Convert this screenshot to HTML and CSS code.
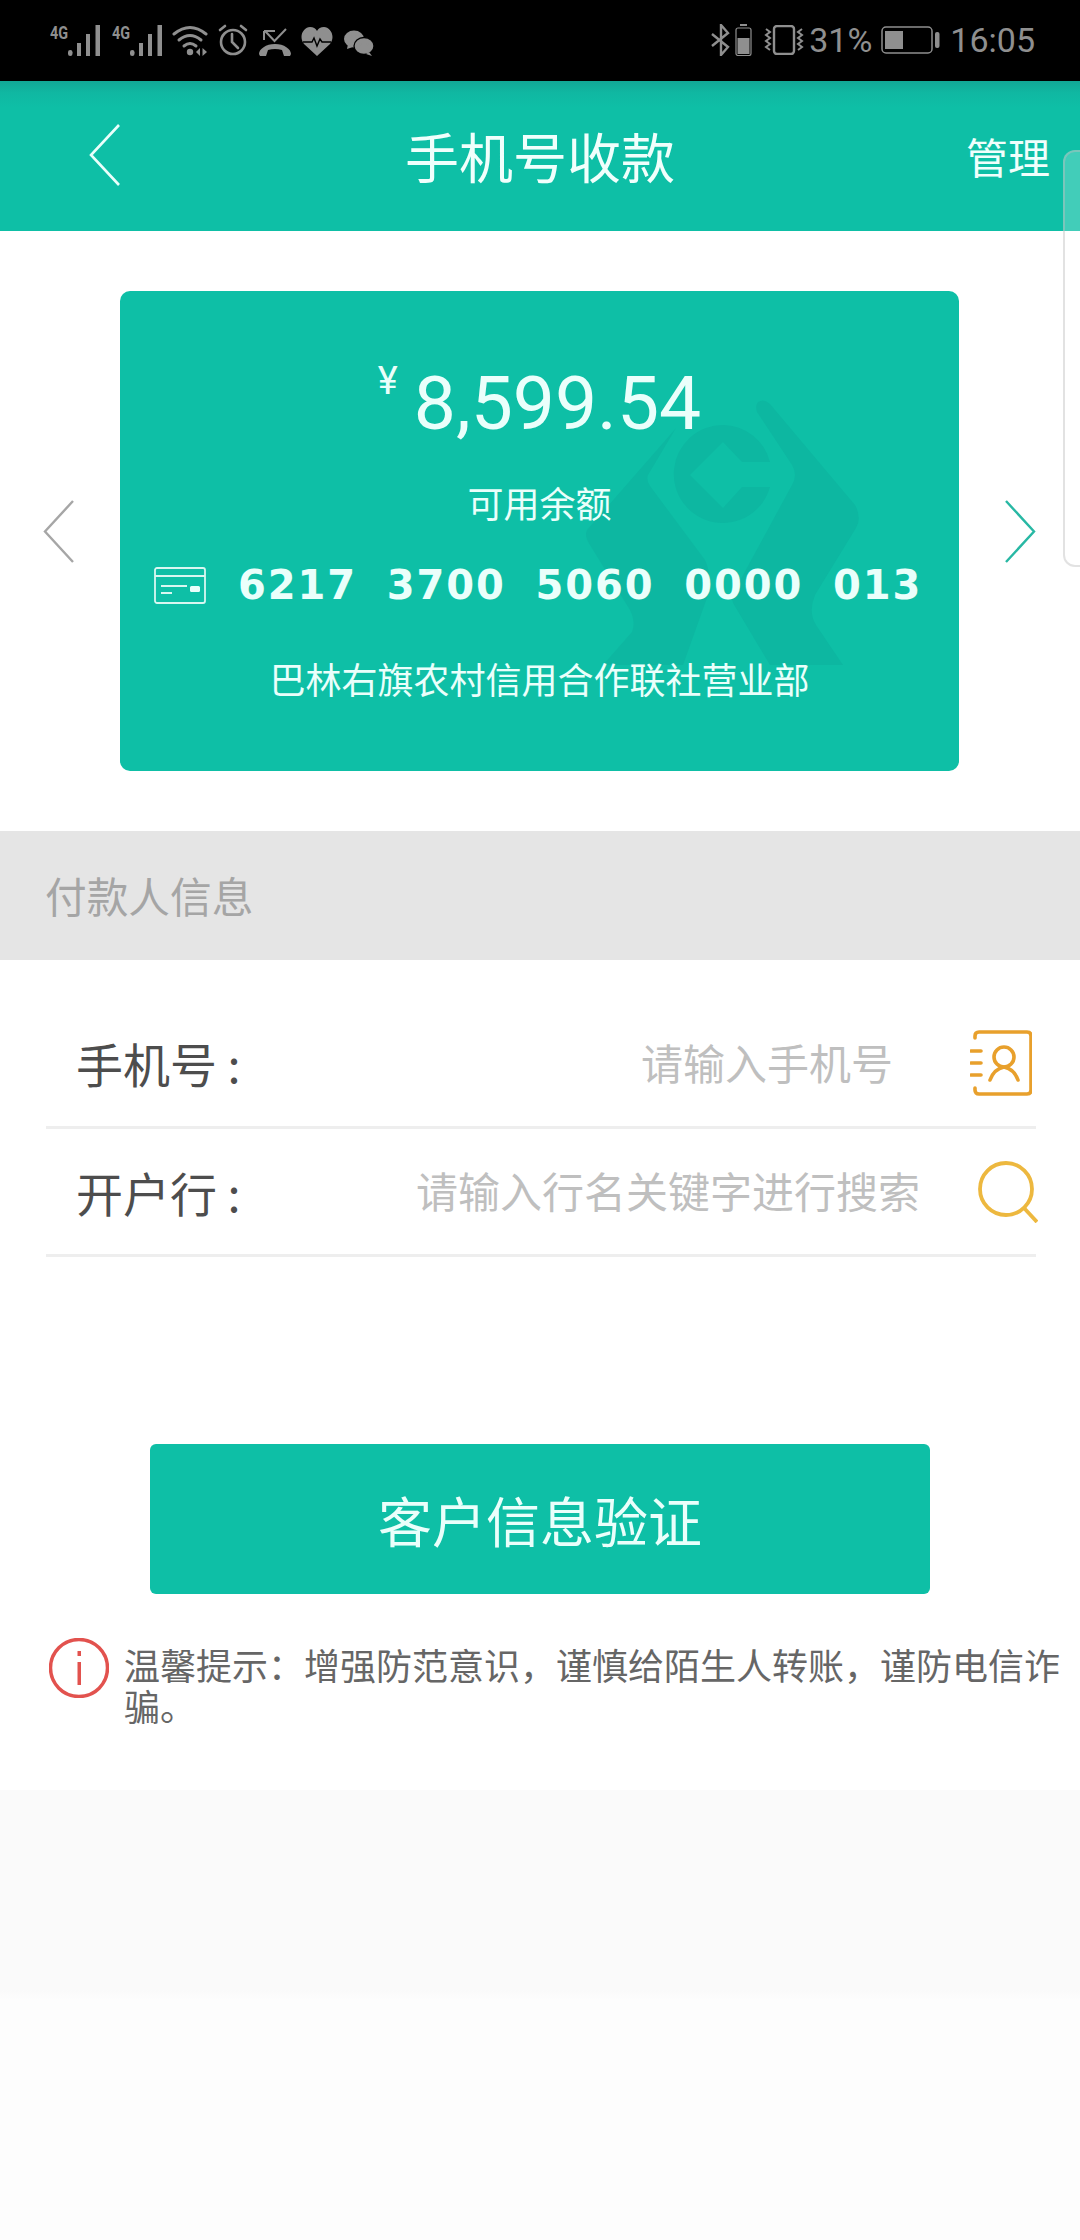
FILE: index.html
```html
<!DOCTYPE html>
<html lang="zh-CN">
<head>
<meta charset="utf-8">
<title>手机号收款</title>
<link rel="stylesheet" href="styles.css">
</head>
<body>
<div class="page">
  <div class="status">
    <div class="status-left">
      <span class="net">4G</span>
      <svg class="sig" viewBox="0 0 33 32"><rect x="0" y="26" width="4.500" height="6" rx="2.200"/><rect x="9" y="19" width="4" height="13"/><rect x="18" y="10" width="4" height="22"/><rect x="27.500" y="1" width="4.500" height="31"/></svg>
      <span class="net net2">4G</span>
      <svg class="sig" viewBox="0 0 33 32"><rect x="0" y="26" width="4.500" height="6" rx="2.200"/><rect x="9" y="19" width="4" height="13"/><rect x="18" y="10" width="4" height="22"/><rect x="27.500" y="1" width="4.500" height="31"/></svg>
      <svg class="ic-wifi" viewBox="0 0 36 32"><g fill="none" stroke="#8f8f8f" stroke-width="3" stroke-linecap="round"><path d="M2 10Q18-3 34 10"/><path d="M7 16Q18 7 29 16"/><path d="M12 22Q18 17 24 22"/></g><circle cx="18" cy="28" r="3.200" fill="#8f8f8f"/><path d="M28 24v8l-4-4zM30.500 24v8l4.500-4z" fill="#8f8f8f"/></svg>
      <svg class="ic-alarm" viewBox="0 0 30 32"><g fill="none" stroke="#8f8f8f" stroke-width="2.600" stroke-linecap="round"><circle cx="15" cy="18" r="12"/><path d="M14 10v8l6 6M2 6l5-4M28 6l-5-4"/></g></svg>
      <svg class="ic-call" viewBox="0 0 32 28"><path d="M5 3h11M5 3v9M6 3l9.500 10L27 1" fill="none" stroke="#8f8f8f" stroke-width="2"/><path d="M0 26c0-5 7-10 16-10s16 5 16 10l-1 2h-6l-2-6q-7-2-14 0l-2 6H1z" fill="#8f8f8f"/></svg>
      <svg class="ic-heart" viewBox="0 0 32 29"><path d="M16 29 3 17C-3 9 3 0 9 0q5 0 7 4 2-4 7-4c6 0 12 9 6 17z" fill="#8f8f8f"/><path d="M2 15h9l2-4 3 8 3-7 2 3h9" fill="none" stroke="#000" stroke-width="1.400"/></svg>
      <svg class="ic-wechat" viewBox="0 0 30 26"><ellipse cx="10" cy="9" rx="10" ry="8.500" fill="#8f8f8f"/><path d="M4 14l-1 5 6-2z" fill="#8f8f8f"/><circle cx="6.500" cy="6.500" r="1.400"/><circle cx="13" cy="6.500" r="1.400"/><ellipse cx="20" cy="16" rx="10" ry="8.500" fill="#8f8f8f" stroke="#000" stroke-width="1.300"/><path d="M25 22l3 4-6-2z" fill="#8f8f8f"/><circle cx="16.500" cy="14.500" r="1.400"/><circle cx="23.500" cy="14.500" r="1.400"/></svg>
    </div>
    <div class="status-right">
      <svg class="ic-bt" viewBox="0 0 21 32"><path d="M1 10l16 13-7 8V1l7 8L1 22" fill="none" stroke="#8f8f8f" stroke-width="2.400"/></svg>
      <svg class="ic-minibat" viewBox="0 0 17 32"><rect x="5" y="0" width="7" height="2" fill="#8f8f8f"/><rect x="1" y="4" width="15" height="27.500" rx="2" fill="none" stroke="#8f8f8f" stroke-width="1.200"/><rect x="2.500" y="14" width="12" height="16" fill="#8f8f8f"/></svg>
      <svg class="ic-vib" viewBox="0 0 40 30"><rect x="10" y="1" width="20" height="28" rx="3" fill="none" stroke="#8f8f8f" stroke-width="2.400"/><path d="M2 4l4 3-4 3 4 3-4 3 4 3-4 3 4 3M38 4l-4 3 4 3-4 3 4 3-4 3 4 3-4 3" fill="none" stroke="#8f8f8f" stroke-width="2"/></svg>
      <span class="pct">31%</span>
      <svg class="ic-bat" viewBox="0 0 59 28"><rect x="1" y="1" width="50" height="26" rx="4" fill="none" stroke="#8f8f8f" stroke-width="1.500"/><rect x="4" y="5" width="18" height="18" fill="#8f8f8f"/><rect x="54" y="6" width="4.500" height="16" rx="2" fill="#8f8f8f"/></svg>
      <span class="time">16:05</span>
    </div>
  </div>

  <header class="header">
    <svg class="chev-back" viewBox="0 0 31 62"><path d="M30 1 2 31l28 30" fill="none" stroke="#eafffb" stroke-width="2.600"/></svg>
    <h1 class="title">手机号收款</h1>
    <a class="manage">管理</a>
  </header>

  <section class="carousel">
    <svg class="chev" viewBox="0 0 31 63"><path d="M30 1 2 31.500 30 62" fill="none" stroke="#a6a6a6" stroke-width="2.400"/></svg>
    <div class="card">
      <svg class="watermark" viewBox="0 0 300 300">
        <path d="M17 140 100 45 106 38 78 85Q76 90 80 96L135 170Q142 185 138 205L113 275H33L62 242Q66 232 60 220L20 155Q14 146 17 140Z"/>
        <path d="M188 12Q194 8 200 14L285 115Q292 128 286 138L245 205Q238 222 246 235L273 275H200L163 213Q160 205 166 198L222 95Q228 85 222 75L187 22Q185 16 188 12Z"/>
        <path fill-rule="evenodd" d="M153 35A49 49 0 0 1 200 72H172L153 52 120 85 153 118 172 97H200A49 49 0 1 1 153 35Z"/>
      </svg>
      <div class="amount"><span class="yen">¥</span><span class="num">8,599.54</span></div>
      <div class="avail">可用余额</div>
      <div class="cardno">
        <svg class="ic-card" viewBox="0 0 52 37"><g fill="none" stroke="#d8f7f1" stroke-width="1.800"><rect x="1" y="1" width="50" height="35" rx="2"/><path d="M1 9h50M7 19h26M7 26h11"/></g><rect x="36" y="19" width="10" height="6" rx="1.500" fill="#eafffb"/></svg>
        <span class="digits">6217 3700 5060 0000 013</span>
      </div>
      <div class="branch">巴林右旗农村信用合作联社营业部</div>
    </div>
    <svg class="chev" viewBox="0 0 31 63"><path d="M1 1l28 30.500L1 62" fill="none" stroke="#28b8a4" stroke-width="2.400"/></svg>
  </section>

  <div class="band">付款人信息</div>

  <form class="form">
    <div class="row">
      <span class="label">手机号 :</span>
      <span class="hint">请输入手机号</span>
      <svg class="ic-contact" viewBox="0 0 62 66"><g fill="none" stroke="#e8a02c" stroke-width="3.600" stroke-linecap="round"><path d="M5 8V6q0-4 4-4h48q4 0 4 4v54q0 4-4 4H9q-4 0-4-4v-2"/><path d="M1 21h10M1 33h10M1 45h10"/><circle cx="34" cy="27" r="10"/><path d="M20 50q4-11 14-13 10 2 14 13"/></g></svg>
    </div>
    <div class="row">
      <span class="label">开户行 :</span>
      <span class="hint hint-long">请输入行名关键字进行搜索</span>
      <svg class="ic-search" viewBox="0 0 60 62"><g fill="none" stroke="#edb83f" stroke-width="3.800"><circle cx="28" cy="28" r="26"/><path d="M46 47l13 14"/></g></svg>
    </div>
  </form>

  <div class="action"><button class="verify" type="button">客户信息验证</button></div>

  <div class="tip">
    <svg class="ic-info" viewBox="0 0 60 60"><circle cx="30" cy="30" r="28.500" fill="none" stroke="#e2524e" stroke-width="3.500"/><rect x="28.500" y="13" width="3.500" height="5" fill="#e2524e"/><rect x="28.500" y="24" width="3.500" height="23" fill="#e2524e"/></svg>
    <p class="tip-text">温馨提示：增强防范意识，谨慎给陌生人转账，谨防电信诈骗。</p>
  </div>

  <div class="foot"></div>
  <div class="side-panel"></div>
</div>
</body>
</html>
```
FILE: styles.css
```css
* { box-sizing: border-box; margin: 0; padding: 0; }
html, body { background: #fff; }
body { font-family: "Noto Sans CJK SC", "Noto Sans", sans-serif; }
.page { position: relative; width: 1080px; height: 2240px; overflow: hidden; display: flex; flex-direction: column; }

.status { height: 81px; flex: none; background: #000; display: flex; justify-content: space-between; align-items: flex-start; padding: 24px 45px 0 50px; color: #8f8f8f; fill: #8f8f8f; }
.status-left, .status-right { display: flex; align-items: center; height: 32px; }
.net { font-family: "Roboto", sans-serif; font-size: 18px; font-weight: 700; line-height: 18px; align-self: flex-start; transform: scaleX(.8); transform-origin: left top; width: 18px; white-space: nowrap; }
.net2 { margin-left: 11px; }
.sig { width: 33px; height: 32px; }
.ic-wifi { width: 36px; height: 32px; margin-left: 9px; }
.ic-alarm { width: 30px; height: 32px; margin-left: 10px; }
.ic-call { width: 32px; height: 28px; margin-left: 11px; margin-top: 4px; }
.ic-heart { width: 32px; height: 29px; margin-left: 10px; margin-top: 3px; }
.ic-wechat { width: 30px; height: 26px; margin-left: 11px; margin-top: 5px; }
.ic-bt { width: 21px; height: 32px; }
.ic-minibat { width: 17px; height: 32px; margin-left: 3px; }
.ic-vib { width: 40px; height: 30px; margin-left: 12px; }
.pct, .time { font-family: "Roboto", sans-serif; font-size: 34px; line-height: 32px; }
.pct { margin-left: 5px; }
.ic-bat { width: 59px; height: 28px; margin-left: 9px; }
.time { margin-left: 10px; }

.header { height: 150px; flex: none; position: relative; background: linear-gradient(#12a896 0, #10b8a2 12px, #0ebfa6 26px); display: grid; grid-template-columns: 1fr auto 1fr; align-items: center; color: #f0fffc; }
.chev-back { width: 31px; height: 62px; margin-left: 89px; margin-top: -2px; }
.title { font-size: 54px; font-weight: 400; line-height: 60px; }
.manage { justify-self: end; font-size: 42px; line-height: 48px; padding-right: 30px; }

.carousel { height: 600px; flex: none; padding: 60px 44px 0 43px; display: flex; justify-content: space-between; align-items: flex-start; }
.chev { width: 31px; height: 63px; margin-top: 209px; }
.card { position: relative; width: 839px; height: 480px; border-radius: 10px; background: #0ebfa6; color: #eafffb; display: flex; flex-direction: column; align-items: center; overflow: hidden; }
.watermark { position: absolute; left: 450px; top: 99px; width: 300px; height: 300px; fill: #0db7a1; }
.amount, .avail, .cardno, .branch { position: relative; }
.amount { display: flex; align-items: flex-start; gap: 16px; height: 100px; margin-top: 68px; }
.yen { font-family: "Roboto", sans-serif; font-size: 38px; line-height: 44px; }
.num { font-family: "Roboto", sans-serif; font-size: 75px; line-height: 88px; font-weight: 400; }
.avail { font-size: 36px; line-height: 46px; margin-top: 20px; }
.cardno { align-self: stretch; display: flex; align-items: center; padding-left: 34px; height: 40px; margin-top: 40px; }
.ic-card { width: 52px; height: 37px; flex: none; }
.digits { font-family: "DejaVu Sans", sans-serif; font-weight: 700; font-size: 40px; letter-spacing: 1.900px; word-spacing: 14px; margin-left: 32px; white-space: nowrap; }
.branch { font-size: 36px; line-height: 48px; margin-top: 49px; }

.band { height: 129px; flex: none; background: #e5e5e5; color: #a5a5a5; font-size: 41.700px; line-height: 129px; padding-left: 45px; }

.form { flex: none; padding: 40px 44px 0 46px; height: 299px; display: flex; flex-direction: column; }
.row { height: 128px; flex: none; border-bottom: 3px solid #eee; display: flex; align-items: center; position: relative; }
.row:first-child { height: 129px; }
.label { font-size: 47px; color: #4d4d4d; margin-left: 30px; flex: 1; line-height: 56px; }
.hint { font-size: 42px; color: #bfbfbf; line-height: 56px; margin-bottom: 3px; }
.hint-long { margin-right: 58px; }
.ic-contact { width: 62px; height: 66px; margin-left: 77px; margin-right: 4px; }
.ic-search { width: 60px; height: 62px; margin-right: -2px; }

.action { flex: none; padding: 185px 150px 0; }
.verify { display: block; width: 780px; height: 150px; border: 0; border-radius: 6px; background: #0ebfa6; color: #eafffb; font: inherit; font-size: 54px; }

.tip { flex: none; display: flex; align-items: flex-start; padding: 44px 10px 0 49px; height: 196px; }
.ic-info { width: 60px; height: 60px; flex: none; }
.tip-text { margin-left: 15px; font-size: 36px; line-height: 41px; color: #666; margin-top: 6px; }

.foot { flex: 1; background: linear-gradient(#fafafa 0, #fafafa 200px, #fdfdfd 210px, #fdfdfd 100%); }

.side-panel { position: absolute; right: -20px; top: 150px; width: 37px; height: 417px; border-radius: 12px; border: 2px solid rgba(190,190,190,.45); background: rgba(255,255,255,.22); }
```
